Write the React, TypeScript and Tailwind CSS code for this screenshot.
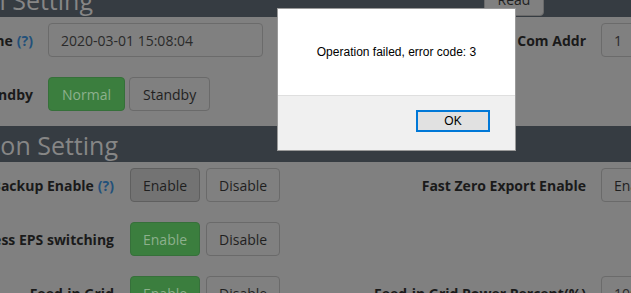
import type { ReactNode } from 'react';

const font = { fontFamily: '"Open Sans", "Liberation Sans", sans-serif' };

function Help() {
  return <span className="ml-1 text-[#22507a]">(?)</span>;
}

function Label({ width, children }: { width: string; children: ReactNode }) {
  return (
    <div className={`flex shrink-0 justify-end whitespace-nowrap text-[14px] font-bold text-[#1a1a1a] ${width}`}>
      <span>{children}</span>
    </div>
  );
}

function Btn({ kind = 'plain', children }: { kind?: 'plain' | 'green' | 'active'; children: ReactNode }) {
  const styles = {
    plain: 'border-[#6a6a6a] bg-[#808080] text-[#1f1f1f]',
    green: 'border-[#36703a] bg-[#3b7e3e] text-[#8db08d]',
    active: 'border-[#5f5f5f] bg-[#737373] text-[#1f1f1f]',
  };
  return (
    <button
      type="button"
      className={`h-[34px] shrink-0 rounded-[4px] border px-3 text-[14px] ${styles[kind]}`}
    >
      {children}
    </button>
  );
}

function Input({ value, width }: { value: string; width: string }) {
  return (
    <div
      className={`flex h-[34px] shrink-0 items-center rounded-[4px] border border-[#6b6b6b] bg-[#808080] pl-[12px] pr-3 text-[14px] text-[#2a2a2a] ${width}`}
    >
      {value}
    </div>
  );
}

function SectionHeader({ title, textEnd, children }: { title: string; textEnd: string; children?: ReactNode }) {
  return (
    <div className="flex h-[36px] items-center bg-[#363c42]">
      <div className={`flex shrink-0 justify-end whitespace-nowrap pt-[2px] text-[25px] leading-none text-[#868686] ${textEnd}`}>
        <span>{title}</span>
      </div>
      {children}
    </div>
  );
}

export default function App() {
  return (
    <div className="relative h-[293px] w-[631px] overflow-hidden bg-[#808080]" style={font}>
      <div className="-mt-[19px]">
        <SectionHeader title="General Setting" textEnd="w-[93px]">
          <button
            type="button"
            className="ml-auto mr-[87px] h-[34px] w-[60px] rounded-[4px] border border-[#6a6a6a] bg-[#808080] text-[14px] text-[#1f1f1f]"
          >
            Read
          </button>
        </SectionHeader>

        <div className="flex flex-col gap-[20px] pb-[15px] pt-[6px]">
          <div className="flex items-center">
            <div className="flex w-[316px] shrink-0 items-center">
              <Label width="w-[33px]">
                Local Time<Help />
              </Label>
              <div className="w-[15px] shrink-0" />
              <Input value="2020-03-01 15:08:04" width="w-[215px]" />
            </div>
            <div className="flex shrink-0 items-center gap-[15px]">
              <Label width="w-[270px]">Com Addr</Label>
              <Input value="1" width="w-[120px]" />
            </div>
          </div>

          <div className="flex items-center">
            <div className="flex w-[316px] shrink-0 items-center gap-[15px]">
              <Label width="w-[33px]">Normal/Standby</Label>
              <div className="flex gap-[4px]">
                <Btn kind="green">
                  <span className="px-[1px]">Normal</span>
                </Btn>
                <Btn>
                  <span className="px-[1px]">Standby</span>
                </Btn>
              </div>
            </div>
          </div>
        </div>

        <SectionHeader title="Function Setting" textEnd="w-[118px]" />

        <div className="flex flex-col gap-[20px] pt-[6px]">
          <div className="flex items-center">
            <div className="flex w-[316px] shrink-0 items-center gap-[16px]">
              <Label width="w-[114px]">
                Backup Enable<Help />
              </Label>
              <div className="flex gap-[6px]">
                <Btn kind="active">Enable</Btn>
                <Btn>Disable</Btn>
              </div>
            </div>
            <div className="flex shrink-0 items-center gap-[15px]">
              <Label width="w-[270px]">Fast Zero Export Enable</Label>
              <Btn>Enable</Btn>
            </div>
          </div>

          <div className="flex items-center">
            <div className="flex w-[316px] shrink-0 items-center gap-[16px]">
              <Label width="w-[114px]">Seamless EPS switching</Label>
              <div className="flex gap-[6px]">
                <Btn kind="green">Enable</Btn>
                <Btn>Disable</Btn>
              </div>
            </div>
          </div>

          <div className="flex items-center">
            <div className="flex w-[316px] shrink-0 items-center gap-[16px]">
              <Label width="w-[114px]">Feed-in Grid</Label>
              <div className="flex gap-[6px]">
                <Btn kind="green">Enable</Btn>
                <Btn>Disable</Btn>
              </div>
            </div>
            <div className="flex shrink-0 items-center gap-[15px]">
              <Label width="w-[270px]">Feed-in Grid Power Percent(%)</Label>
              <Input value="100" width="w-[120px]" />
            </div>
          </div>
        </div>
      </div>

      {/* alert dialog over the dimmed page */}
      <div
        className="absolute left-[277px] top-[8px] flex h-[143px] w-[239px] flex-col border border-[#9a9a9a] bg-white"
        style={{ fontFamily: '"Liberation Sans", Arial, sans-serif' }}
      >
        <div className="flex h-[86px] items-center justify-center text-[12px] text-black">
          Operation failed, error code: 3
        </div>
        <div className="flex flex-1 items-start justify-end border-t border-[#dfdfdf] bg-[#f0f0f0] pr-[25px] pt-[14px]">
          <button
            type="button"
            className="h-[22px] w-[74px] border-2 border-[#0078d7] bg-[#e1e1e1] text-[12px] text-black"
          >
            OK
          </button>
        </div>
      </div>
    </div>
  );
}
